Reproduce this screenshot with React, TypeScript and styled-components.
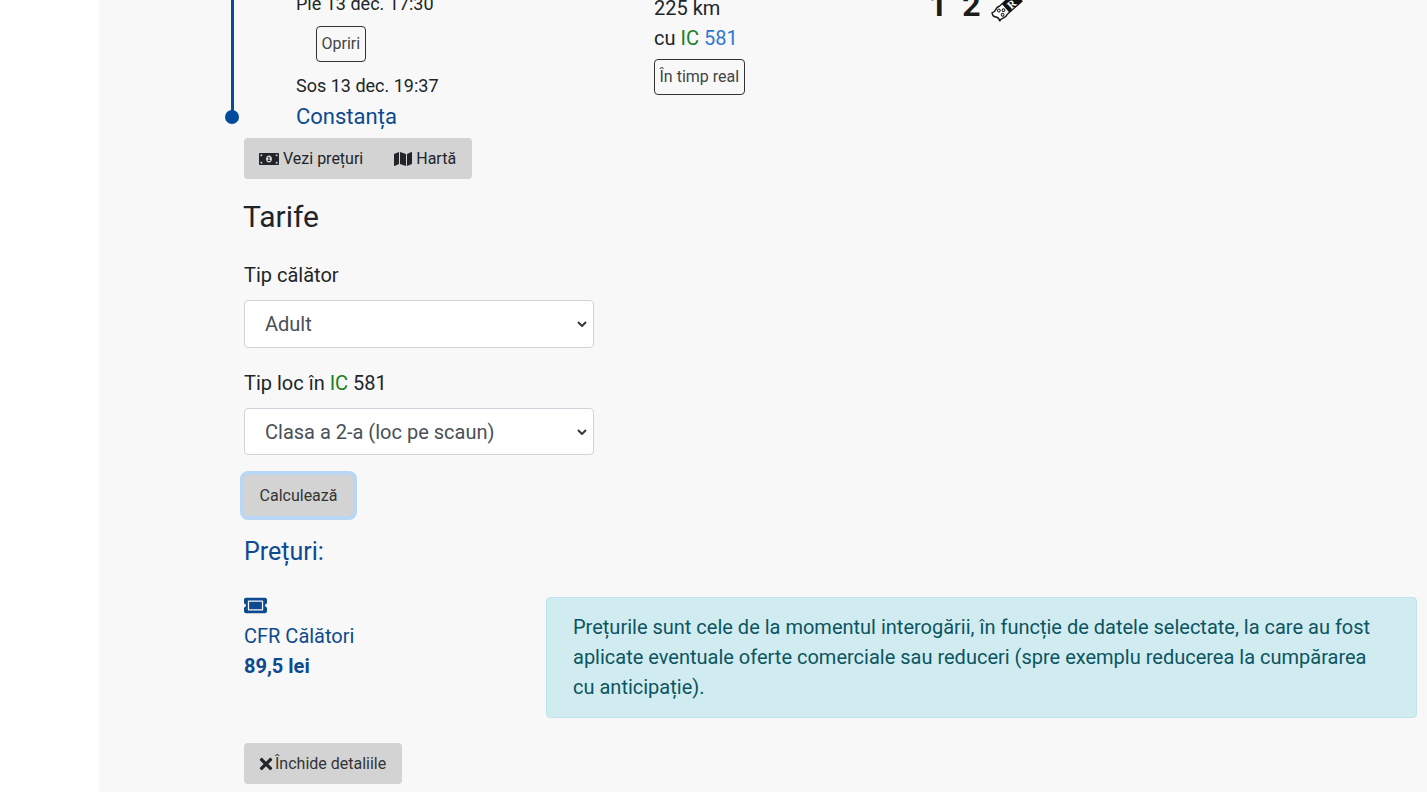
import { FaMap, FaMoneyBillAlt, FaTicketAlt, FaTimes } from "react-icons/fa";
import styled, { createGlobalStyle } from "styled-components";

const GlobalStyle = createGlobalStyle`
    html, body {
        margin: 0;
        height: 100%;
        overflow: hidden;
        background: #fff;
    }
    * {
        box-sizing: border-box;
    }
`;

const Page = styled.div`
    display: flex;
    height: 792px;
    overflow: hidden;
    font-family: Roboto, "Liberation Sans", sans-serif;
    font-size: 18px;
    line-height: 27px;
    color: #212529;
`;

const Gutter = styled.div`
    width: 99px;
    flex-shrink: 0;
    background: #fff;
`;

const Main = styled.main`
    flex: 1;
    background: #f8f8f8;
    padding-left: 145px;
`;

/* the page is scrolled down in the picture, so the first row starts above the fold */
const Scrolled = styled.div`
    margin-top: -10px;
`;

const Journey = styled.div`
    display: flex;
    margin-left: -19px;
    height: 148px;
`;

const Track = styled.div`
    width: 14px;
    height: 134px;
    flex-shrink: 0;
    display: flex;
    flex-direction: column;
    align-items: center;
`;

const TrackLine = styled.div`
    flex: 1;
    width: 3px;
    background: #0b4a94;
`;

const TrackDot = styled.div`
    width: 14px;
    height: 14px;
    margin-top: -1px;
    border-radius: 50%;
    background: #004b9c;
`;

const Stops = styled.div`
    width: 358px;
    margin-left: 57px;
    flex-shrink: 0;
`;

const StopsButton = styled.div`
    margin: 9px 0 10px 20px;
`;

const Station = styled.div`
    margin-top: 1px;
    font-size: 22px;
    line-height: 33px;
    color: #0d4a8f;
`;

const Route = styled.div`
    width: 275px;
    flex-shrink: 0;
    padding-top: 3px;
    font-size: 20px;
`;

const Distance = styled.div`
    line-height: 30px;
`;

const OutlineButton = styled.button`
    display: inline-block;
    height: 36px;
    padding: 0 4.5px;
    border: 1px solid #333;
    border-radius: 4px;
    background: transparent;
    color: #444;
    font: 400 16px/24px Roboto, "Liberation Sans", sans-serif;
`;

const RouteButton = styled.div`
    margin-top: 6px;
`;

const Green = styled.span`
    color: #1a7f26;
`;

const Blue = styled.span`
    color: #2f78d0;
`;

const Classes = styled.div`
    display: flex;
    align-items: flex-start;
    gap: 10px;
    margin-top: -2px;
    font-weight: 700;
    font-size: 32px;
    line-height: 34px;
    color: #1c1c1c;
    word-spacing: 7px;
`;

const ReservationIcon = styled.svg`
    width: 32px;
    height: 30px;
    margin-top: 4px;
`;

const Actions = styled.div`
    display: inline-flex;
    background: #d3d3d3;
    border-radius: 4px;
    height: 41px;
    align-items: center;
    padding: 0 16px 0 15px;
    gap: 31px;
    vertical-align: top;
`;

const ActionLabel = styled.span`
    display: inline-flex;
    align-items: center;
    gap: 4px;
    font-size: 16px;
    line-height: 24px;
    white-space: nowrap;
    color: #212529;
    svg {
        color: #212529;
    }
`;

const CloseLabel = styled(ActionLabel)`
    gap: 0;
    color: #333;
    svg {
        margin-left: -2px;
    }
`;

const Title = styled.h2`
    margin: 18px 0 0 -1px;
    font-size: 30px;
    font-weight: 400;
    line-height: 39px;
`;

const FieldLabel = styled.label`
    display: block;
    margin-top: 25px;
    font-size: 20px;
    line-height: 28px;
`;

const Select = styled.select<{ $height: number }>`
    display: block;
    width: 350px;
    height: ${({ $height }) => $height}px;
    margin-top: 11px;
    padding: 0 24px 0 20px;
    border: 1px solid #ced4da;
    border-radius: 4px;
    appearance: none;
    background: #fff url("data:image/svg+xml,%3Csvg xmlns='http://www.w3.org/2000/svg' width='10' height='6'%3E%3Cpath d='M1 1l4 4 4-4' fill='none' stroke='%23343a40' stroke-width='2'/%3E%3C/svg%3E") no-repeat right 6px center;
    color: #495057;
    font: 400 20px/30px Roboto, "Liberation Sans", sans-serif;
`;

const SecondLabel = styled(FieldLabel)`
    margin-top: 21px;
`;

const Submit = styled.button`
    display: block;
    width: 109px;
    height: 41px;
    margin-top: 20px;
    border: 0;
    border-radius: 4px;
    background: #d3d3d3;
    box-shadow: 0 0 0 4px #b9d6f5;
    color: #333;
    font: 400 16px/24px Roboto, "Liberation Sans", sans-serif;
`;

const PricesTitle = styled.h3`
    margin: 18px 0 0;
    font-size: 25px;
    font-weight: 400;
    line-height: 36px;
    color: #0d4a8f;
`;

const Fares = styled.div`
    display: flex;
    margin-top: 27px;
`;

const Fare = styled.div`
    width: 302px;
    flex-shrink: 0;
    color: #0d4a8f;
    font-size: 20px;
    line-height: 30px;
`;

const FareIcon = styled.div`
    height: 24px;
    display: flex;
    align-items: center;
    margin: -4px 0 4px;
`;

const FarePrice = styled.div`
    font-weight: 700;
`;

const Notice = styled.div`
    width: 871px;
    height: 121px;
    padding: 14px 26px;
    border: 1px solid #bee5eb;
    border-radius: 4px;
    background: #d1ecf1;
    color: #0c5460;
    font-size: 20px;
    line-height: 30px;
`;

const CloseButton = styled(Actions)`
    display: flex;
    width: 158px;
    margin-top: 25px;
`;

function App() {
    return (
        <>
            <GlobalStyle />
            <Page>
                <Gutter />
                <Main>
                    <Scrolled>
                        <Journey>
                            <Track>
                                <TrackLine />
                                <TrackDot />
                            </Track>
                            <Stops>
                                <div>Pie 13 dec. 17:30</div>
                                <StopsButton>
                                    <OutlineButton>Opriri</OutlineButton>
                                </StopsButton>
                                <div>Sos 13 dec. 19:37</div>
                                <Station>Constanța</Station>
                            </Stops>
                            <Route>
                                <Distance>225 km</Distance>
                                <Distance>
                                    cu <Green>IC</Green> <Blue>581</Blue>
                                </Distance>
                                <RouteButton>
                                    <OutlineButton>În timp real</OutlineButton>
                                </RouteButton>
                            </Route>
                            <Classes>
                                <span>1 2</span>
                                <ReservationIcon viewBox="0 0 34 32">
                                    <g transform="rotate(-42 17 16)">
                                        <path
                                            d="M1 10c2 1 3 1 5 0s4-1 6 0h21v12H12c-2 1-4 1-6 0s-3-1-5 0c1.500-2 1.500-4 0-6s-1.500-4 0-6z"
                                            fill="#fff"
                                            stroke="#111"
                                            strokeWidth="1.5"
                                        />
                                        <path d="M15 10h18v12H15z" fill="#111" />
                                        <circle cx="8" cy="13" r="1.500" fill="none" stroke="#111" />
                                        <circle cx="12" cy="16" r="1.500" fill="none" stroke="#111" />
                                        <circle cx="8" cy="19" r="1.500" fill="none" stroke="#111" />
                                    </g>
                                    <text
                                        x="22"
                                        y="17"
                                        fill="#fff"
                                        fontSize="12"
                                        fontWeight="700"
                                        fontFamily="'Liberation Serif', serif"
                                        textAnchor="middle"
                                        transform="rotate(-42 22 13)"
                                    >
                                        R
                                    </text>
                                </ReservationIcon>
                            </Classes>
                        </Journey>
                        <Actions>
                            <ActionLabel>
                                <FaMoneyBillAlt size={20} />
                                Vezi prețuri
                            </ActionLabel>
                            <ActionLabel>
                                <FaMap size={18} />
                                Hartă
                            </ActionLabel>
                        </Actions>
                        <Title>Tarife</Title>
                        <FieldLabel>Tip călător</FieldLabel>
                        <Select $height={48}>
                            <option>Adult</option>
                        </Select>
                        <SecondLabel>
                            Tip loc în <Green>IC</Green> 581
                        </SecondLabel>
                        <Select $height={47}>
                            <option>Clasa a 2-a (loc pe scaun)</option>
                        </Select>
                        <Submit>Calculează</Submit>
                        <PricesTitle>Prețuri:</PricesTitle>
                        <Fares>
                            <Fare>
                                <FareIcon>
                                    <FaTicketAlt size={23} />
                                </FareIcon>
                                <div>CFR Călători</div>
                                <FarePrice>89,5 lei</FarePrice>
                            </Fare>
                            <Notice>
                                Prețurile sunt cele de la momentul interogării, în funcție de datele selectate, la care au fost
                                aplicate eventuale oferte comerciale sau reduceri (spre exemplu reducerea la cumpărarea cu
                                anticipație).
                            </Notice>
                        </Fares>
                        <CloseButton>
                            <CloseLabel>
                                <FaTimes size={18} />
                                Închide detaliile
                            </CloseLabel>
                        </CloseButton>
                    </Scrolled>
                </Main>
            </Page>
        </>
    );
}

export default App;
